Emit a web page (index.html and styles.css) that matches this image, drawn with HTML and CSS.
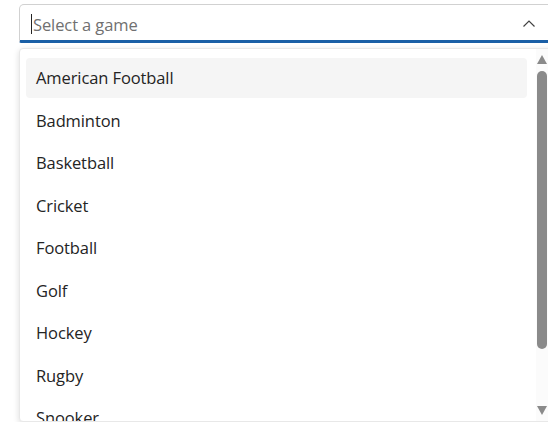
FILE: index.html
```html
<!DOCTYPE html>
<html lang="en">
<head>
  <meta charset="UTF-8">
  <title>Select a game</title>
  <link rel="stylesheet" href="styles.css">
</head>
<body>
  <div class="combo">
    <div class="combo-input">
      <span class="caret"></span>
      <span class="placeholder">Select a game</span>
      <svg class="chevron" width="14" height="14" viewBox="0 0 14 14">
        <path d="M1.5 9.5 L7 4 L12.5 9.5" fill="none" stroke="#424242" stroke-width="1.2"/>
      </svg>
    </div>
    <div class="listbox">
      <ul class="options">
        <li class="option active">American Football</li>
        <li class="option">Badminton</li>
        <li class="option">Basketball</li>
        <li class="option">Cricket</li>
        <li class="option">Football</li>
        <li class="option">Golf</li>
        <li class="option">Hockey</li>
        <li class="option">Rugby</li>
        <li class="option">Snooker</li>
      </ul>
      <div class="scrollbar">
        <span class="arrow-up"></span>
        <div class="track"><div class="thumb"></div></div>
        <span class="arrow-down"></span>
      </div>
    </div>
  </div>
</body>
</html>
```

FILE: styles.css
```css
body {
  margin: 0;
  overflow: hidden;
  background: #fff;
  font-family: "Open Sans", "Noto Sans", sans-serif;
  color: #242424;
}
.combo {
  margin: 4px 0 0 19px;
  width: 560px;
}
.combo-input {
  display: flex;
  align-items: center;
  height: 35px;
  border: 1px solid #d1d1d1;
  border-bottom: 3px solid #1a5fa6;
  border-radius: 5px 5px 2px 2px;
  padding: 3px 12px 0 11px;
  box-sizing: border-box;
  height: 39px;
}
.caret {
  width: 1px;
  height: 20px;
  background: #242424;
  margin-right: 1px;
}
.placeholder {
  flex: 1;
  font-size: 16.5px;
  color: #707070;
  letter-spacing: -0.1px;
}
.chevron {
  margin-right: 30px;
}
.listbox {
  display: flex;
  margin-top: 5px;
  height: 374px;
  background: #fff;
  border: 1px solid #e8e8e8;
  border-radius: 4px;
  box-shadow: 0 2px 6px rgba(0, 0, 0, 0.14);
  box-sizing: border-box;
  overflow: hidden;
}
.options {
  list-style: none;
  margin: 0;
  padding: 9px 0 0 6px;
  width: 501px;
  display: flex;
  flex-direction: column;
  gap: 3px;
  overflow: hidden;
}
.option {
  flex: none;
  height: 39.5px;
  line-height: 40.5px;
  padding-left: 10px;
  font-size: 16.5px;
  letter-spacing: -0.1px;
  border-radius: 4px;
}
.option.active {
  background: #f5f5f5;
}
.scrollbar {
  margin-left: 9px;
  width: 12px;
  display: flex;
  flex-direction: column;
  align-items: center;
  padding: 6px 0 6px;
  background: #fbfbfb;
}
.arrow-up,
.arrow-down {
  width: 0;
  height: 0;
  border-left: 5.5px solid transparent;
  border-right: 5.5px solid transparent;
}
.arrow-up {
  border-bottom: 9px solid #8a8a8a;
}
.arrow-down {
  border-top: 9px solid #8a8a8a;
}
.track {
  flex: 1;
  padding: 7px 0;
}
.thumb {
  width: 10px;
  height: 278px;
  background: #8a8a8a;
  border-radius: 5px;
}
```
